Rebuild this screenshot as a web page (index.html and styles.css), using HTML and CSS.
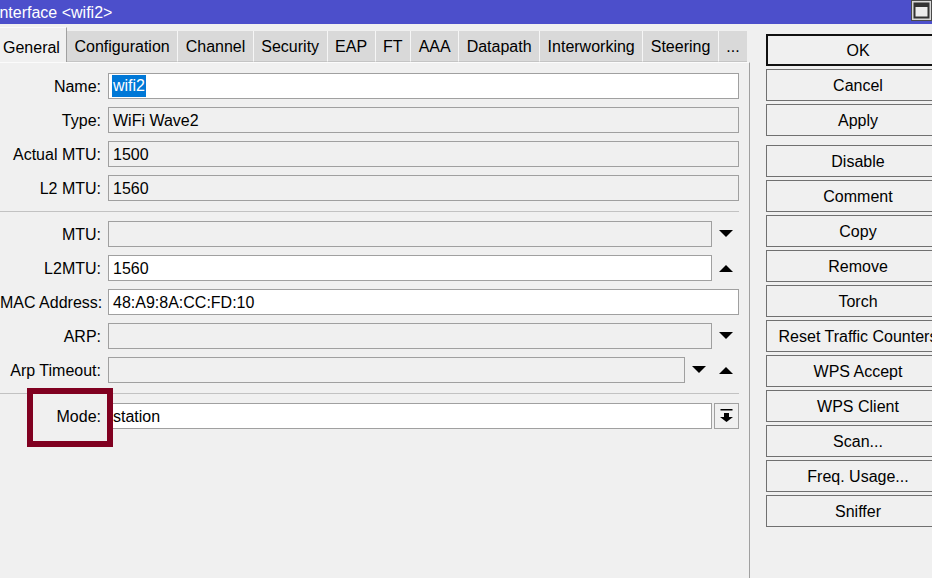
FILE: index.html
```html
<!DOCTYPE html>
<html>
<head>
<meta charset="utf-8">
<link rel="stylesheet" href="styles.css">
</head>
<body>
<div class="window">
  <div class="titlebar">
    <span class="title">Interface &lt;wifi2&gt;</span>
    <svg class="winicon" width="21" height="21" viewBox="0 0 21 21">
      <rect x="0.5" y="0.5" width="20" height="20" fill="#d8d8d8" stroke="#4a4a4a"/>
      <rect x="3.5" y="3.5" width="14" height="14" fill="#ececec" stroke="#333" stroke-width="2"/>
      <rect x="3" y="3" width="15" height="4" fill="#333"/>
    </svg>
  </div>
  <div class="main">
    <div class="left">
      <div class="tabs">
        <div class="tab active">General</div>
        <div class="tab">Configuration</div>
        <div class="tab">Channel</div>
        <div class="tab">Security</div>
        <div class="tab">EAP</div>
        <div class="tab">FT</div>
        <div class="tab">AAA</div>
        <div class="tab">Datapath</div>
        <div class="tab">Interworking</div>
        <div class="tab">Steering</div>
        <div class="tab">...</div>
      </div>
      <div class="panel">
        <div class="row">
          <div class="label">Name:</div>
          <div class="field edit"><span class="sel">wifi2</span></div>
        </div>
        <div class="row">
          <div class="label">Type:</div>
          <div class="field">WiFi Wave2</div>
        </div>
        <div class="row">
          <div class="label">Actual MTU:</div>
          <div class="field">1500</div>
        </div>
        <div class="row">
          <div class="label">L2 MTU:</div>
          <div class="field">1560</div>
        </div>
        <div class="sep"></div>
        <div class="row">
          <div class="label">MTU:</div>
          <div class="field"></div>
          <div class="arrow"><svg width="14" height="8" viewBox="0 0 14 8"><polygon points="0,0 14,0 7,7" fill="#000"/></svg></div>
        </div>
        <div class="row">
          <div class="label">L2MTU:</div>
          <div class="field edit">1560</div>
          <div class="arrow"><svg width="14" height="8" viewBox="0 0 14 8"><polygon points="0,8 14,8 7,1" fill="#000"/></svg></div>
        </div>
        <div class="row">
          <div class="label">MAC Address:</div>
          <div class="field edit">48:A9:8A:CC:FD:10</div>
        </div>
        <div class="row">
          <div class="label">ARP:</div>
          <div class="field"></div>
          <div class="arrow"><svg width="14" height="8" viewBox="0 0 14 8"><polygon points="0,0 14,0 7,7" fill="#000"/></svg></div>
        </div>
        <div class="row">
          <div class="label">Arp Timeout:</div>
          <div class="field"></div>
          <div class="arrow"><svg width="14" height="8" viewBox="0 0 14 8"><polygon points="0,0 14,0 7,7" fill="#000"/></svg></div>
          <div class="arrow"><svg width="14" height="8" viewBox="0 0 14 8"><polygon points="0,8 14,8 7,1" fill="#000"/></svg></div>
        </div>
        <div class="sep"></div>
        <div class="row">
          <div class="label">Mode:</div>
          <div class="field edit">station</div>
          <div class="dropbtn"><svg width="13" height="14" viewBox="0 0 13 14"><rect x="0.5" y="0" width="12" height="1.5" fill="#000"/><rect x="4" y="4" width="5" height="4" fill="#000"/><polygon points="0,8 13,8 6.5,13" fill="#000"/></svg></div>
        </div>
        <div class="highlight"></div>
      </div>
    </div>
    <div class="actions">
      <div class="btn default">OK</div>
      <div class="btn">Cancel</div>
      <div class="btn">Apply</div>
      <div class="btn gapped">Disable</div>
      <div class="btn">Comment</div>
      <div class="btn">Copy</div>
      <div class="btn">Remove</div>
      <div class="btn">Torch</div>
      <div class="btn">Reset Traffic Counters</div>
      <div class="btn">WPS Accept</div>
      <div class="btn">WPS Client</div>
      <div class="btn">Scan...</div>
      <div class="btn">Freq. Usage...</div>
      <div class="btn">Sniffer</div>
    </div>
  </div>
</div>
</body>
</html>
```
FILE: styles.css
```css
* { box-sizing: border-box; }
html, body {
  margin: 0;
  padding: 0;
  width: 932px;
  height: 578px;
  overflow: hidden;
  background: #f0f0f0;
  font-family: "Liberation Sans", Arial, sans-serif;
  font-size: 16px;
  color: #000;
}
.window {
  display: flex;
  flex-direction: column;
  height: 578px;
}
.titlebar {
  height: 24px;
  flex-shrink: 0;
  background: #4c4fcb;
  color: #fff;
  display: flex;
  justify-content: space-between;
  align-items: flex-start;
  overflow: hidden;
}
.title {
  margin-left: -5px;
  line-height: 25px;
  white-space: nowrap;
}
.winicon {
  display: block;
  margin-right: 0;
}
.main {
  flex: 1;
  display: flex;
  min-height: 0;
}
.left {
  width: 750px;
  flex-shrink: 0;
  display: flex;
  flex-direction: column;
  position: relative;
}
.tabs {
  display: flex;
  align-items: flex-end;
  margin-top: 3px;
  height: 35px;
}
.tab {
  height: 31px;
  line-height: 32px;
  padding: 0 7.5px;
  background: #d9d9d9;
  border-left: 1px solid #f6f6f6;
  border-bottom: 1px solid #c4c4c4;
  white-space: nowrap;
}
.tab.active {
  height: 35px;
  padding: 4px 0 0 3px;
  width: 67px;
  background: #f0f0f0;
  border-left: none;
  border-bottom: none;
  border-right: 1px solid #a0a0a0;
  border-top: 1px solid #fafafa;
}
.tab.active + .tab { border-left: none; }
.panel {
  flex: 1;
  display: flex;
  flex-direction: column;
  gap: 8px;
  padding-top: 10px;
  border-top: 1px solid #fbfbfb;
  border-right: 1px solid #a0a0a0;
  position: relative;
}
.row {
  display: flex;
  height: 26px;
  padding-right: 10px;
}
.label {
  width: 101px;
  flex-shrink: 0;
  text-align: right;
  line-height: 28px;
  white-space: nowrap;
}
.field {
  flex: 1;
  margin-left: 7px;
  height: 26px;
  border: 1px solid #a0a0a0;
  background: #f0f0f0;
  line-height: 24px;
  padding: 1px 0 0 4px;
  white-space: nowrap;
  overflow: hidden;
}
.field.edit { background: #fff; }
.sel {
  display: inline-block;
  background: #0078d7;
  color: #fff;
  line-height: 22px;
  margin-left: -1px;
  padding: 0 1px;
  vertical-align: top;
}
.arrow {
  width: 27px;
  flex-shrink: 0;
  display: flex;
  align-items: center;
  justify-content: center;
}
.arrow svg { display: block; }
.dropbtn {
  width: 25px;
  flex-shrink: 0;
  margin-left: 2px;
  border: 1px solid #a0a0a0;
  background: #f0f0f0;
  display: flex;
  align-items: center;
  justify-content: center;
}
.dropbtn svg { display: block; }
.sep {
  height: 1px;
  flex-shrink: 0;
  background: #c2c2c2;
  margin: 2px 10px 1px 0;
}
.highlight {
  position: absolute;
  left: 27px;
  top: 325px;
  width: 86px;
  height: 59px;
  border: 6px solid #800020;
}
.actions {
  margin-left: 16px;
  padding-top: 10px;
  width: 184px;
  flex-shrink: 0;
  display: flex;
  flex-direction: column;
  gap: 3px;
}
.btn {
  height: 32px;
  flex-shrink: 0;
  border: 1px solid #707070;
  background: #f0f0f0;
  text-align: center;
  line-height: 32px;
  white-space: nowrap;
}
.btn.default {
  border: 2px solid #111;
  line-height: 30px;
}
.btn.gapped { margin-top: 6px; }
```
